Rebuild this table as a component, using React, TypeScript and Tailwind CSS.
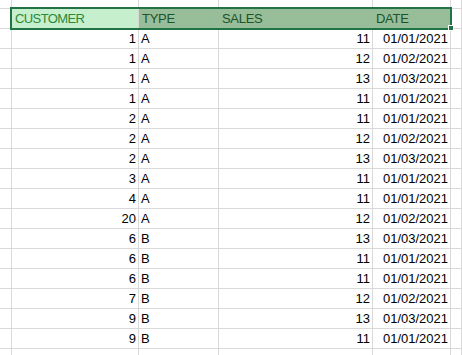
const ROWS: [string, string, string, string][] = [
  ['1', 'A', '11', '01/01/2021'],
  ['1', 'A', '12', '01/02/2021'],
  ['1', 'A', '13', '01/03/2021'],
  ['1', 'A', '11', '01/01/2021'],
  ['2', 'A', '11', '01/01/2021'],
  ['2', 'A', '12', '01/02/2021'],
  ['2', 'A', '13', '01/03/2021'],
  ['3', 'A', '11', '01/01/2021'],
  ['4', 'A', '11', '01/01/2021'],
  ['20', 'A', '12', '01/02/2021'],
  ['6', 'B', '13', '01/03/2021'],
  ['6', 'B', '11', '01/01/2021'],
  ['6', 'B', '11', '01/01/2021'],
  ['7', 'B', '12', '01/02/2021'],
  ['9', 'B', '13', '01/03/2021'],
  ['9', 'B', '11', '01/01/2021'],
];

const cell = 'shrink-0 border-r border-b border-[#d9d9d9] flex items-center overflow-hidden whitespace-nowrap';

function Row({ h, children }: { h: string; children?: React.ReactNode }) {
  return <div className={`flex ${h}`}>{children}</div>;
}

/** Excel-ish sheet: header row selected, green "Good" style on A1. */
export default function App() {
  return (
    <div className="relative h-[355px] w-[462px] overflow-hidden bg-white text-[13px] text-[#000] [font-family:'Liberation_Sans',Arial,sans-serif]">
      <Row h="h-[9px]">
        <div className={`${cell} w-[12px]`} />
        <div className={`${cell} w-[127px]`} />
        <div className={`${cell} w-[80px]`} />
        <div className={`${cell} w-[154px]`} />
        <div className={`${cell} w-[78px]`} />
        <div className={`${cell} flex-1`} />
      </Row>

      <Row h="h-[20px]">
        <div className={`${cell} w-[12px]`} />
        <div className={`${cell} w-[127px] bg-[#c6efce] pl-[3px] tracking-[-0.6px] text-[#2a8a36]`}>CUSTOMER</div>
        <div className={`${cell} w-[80px] border-r-[#97bd99] bg-[#97bd99] pl-[3px] tracking-[-0.3px] text-[#1d5328]`}>TYPE</div>
        <div className={`${cell} w-[154px] border-r-[#97bd99] bg-[#97bd99] pl-[3px] tracking-[-0.3px] text-[#1d5328]`}>SALES</div>
        <div className={`${cell} w-[78px] bg-[#97bd99] pl-[3px] tracking-[-0.3px] text-[#1d5328]`}>DATE</div>
        <div className={`${cell} flex-1`} />
      </Row>

      {ROWS.map((r, i) => (
        <Row key={i} h="h-[20px]">
          <div className={`${cell} w-[12px]`} />
          <div className={`${cell} w-[127px] justify-end pr-[2px]`}>{r[0]}</div>
          <div className={`${cell} w-[80px] pl-[2px]`}>{r[1]}</div>
          <div className={`${cell} w-[154px] justify-end pr-[2px]`}>{r[2]}</div>
          <div className={`${cell} w-[78px] justify-end pr-[2px]`}>{r[3]}</div>
          <div className={`${cell} flex-1`} />
        </Row>
      ))}

      <Row h="h-[20px]">
        <div className={`${cell} w-[12px]`} />
        <div className={`${cell} w-[127px]`} />
        <div className={`${cell} w-[80px]`} />
        <div className={`${cell} w-[154px]`} />
        <div className={`${cell} w-[78px]`} />
        <div className={`${cell} flex-1`} />
      </Row>

      {/* selection frame over A1:D1 */}
      <div className="pointer-events-none absolute left-[10px] top-[7px] h-[23px] w-[442px] border-2 border-[#217346]" />
      <div className="pointer-events-none absolute left-[448px] top-[25px] h-[6px] w-[6px] border border-white bg-[#217346]" />
    </div>
  );
}
